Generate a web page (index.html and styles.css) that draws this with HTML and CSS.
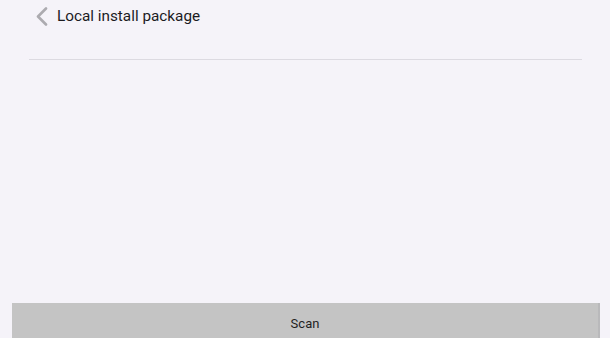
FILE: index.html
```html
<!DOCTYPE html>
<html lang="en">
<head>
    <meta charset="UTF-8">
    <meta name="viewport" content="width=device-width, initial-scale=1.0">
    <title>Local install package</title>
    <link rel="stylesheet" href="styles.css">
</head>
<body>
    <div class="page">
        <header class="top-bar">
            <button class="back-btn" aria-label="Back">
                <svg width="13" height="19" viewBox="0 0 13 19">
                    <path d="M11 1.5 L3 9.5 L11 17.5" fill="none" stroke="#acabb0" stroke-width="2.6" stroke-linecap="round" stroke-linejoin="round"/>
                </svg>
            </button>
            <h1>Local install package</h1>
        </header>
        <div class="divider"></div>
        <div class="content"></div>
        <button class="scan-btn">Scan</button>
    </div>
</body>
</html>
```

FILE: styles.css
```css
body {
    margin: 0;
    font-family: Roboto, "Noto Sans", sans-serif;
    background: #f5f3f9;
    color: #1c1b1f;
}
.page {
    display: flex;
    flex-direction: column;
    height: 338px;
    overflow: hidden;
}
.top-bar {
    display: flex;
    align-items: center;
    height: 32px;
    padding-left: 35px;
}
.back-btn {
    display: flex;
    align-items: center;
    background: none;
    border: none;
    padding: 0;
    margin: 0 9px 0 0;
    width: 13px;
    height: 19px;
    cursor: pointer;
}
h1 {
    margin: 0;
    font-size: 15.3px;
    font-weight: 400;
    color: #1c1b1f;
}
.divider {
    height: 1px;
    margin: 27px 28px 0 29px;
    background: #dcdae1;
}
.content {
    flex: 1;
}
.scan-btn {
    margin: 0 10px 0 12px;
    height: 35px;
    padding: 5px 0 0;
    border: none;
    border-right: 2px solid #b9b9bb;
    background: #c4c4c4;
    font-family: Roboto, sans-serif;
    font-size: 13px;
    color: #1f1f1f;
    cursor: pointer;
}
```
